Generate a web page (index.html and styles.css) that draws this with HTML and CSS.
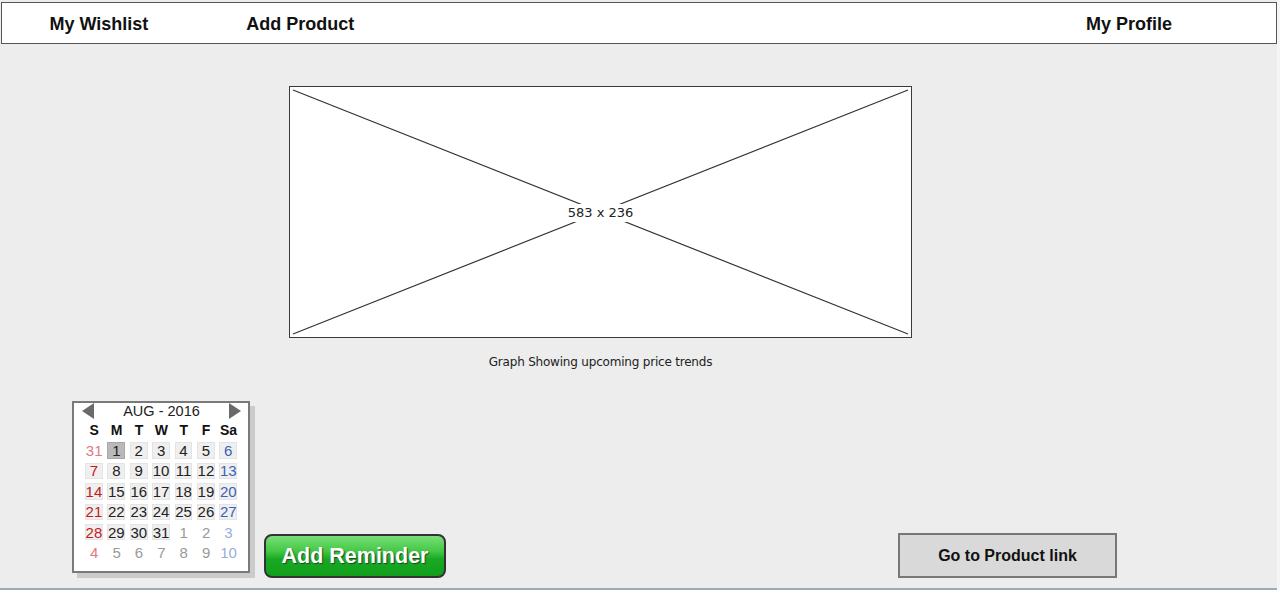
FILE: index.html
```html
<!DOCTYPE html>
<html>
<head>
<meta charset="utf-8">
<link rel="stylesheet" href="styles.css">
</head>
<body>
<div class="page">
  <nav class="nav">
    <a class="nav-item first">My Wishlist</a>
    <a class="nav-item second">Add Product</a>
    <a class="nav-item last">My Profile</a>
  </nav>

  <section class="graph">
    <div class="placeholder">
      <svg class="cross" viewBox="0 0 623 252" preserveAspectRatio="none">
        <line x1="3" y1="3" x2="620" y2="249" />
        <line x1="620" y1="3" x2="3" y2="249" />
      </svg>
      <span class="ph-label">583 x 236</span>
    </div>
    <p class="caption">Graph Showing upcoming price trends</p>
  </section>

  <section class="bottom">
    <div class="calendar">
      <div class="cal-head">
        <span class="arrow left"></span>
        <span class="month">AUG - 2016</span>
        <span class="arrow right"></span>
      </div>
      <div class="cal-grid">
        <span class="dow">S</span><span class="dow">M</span><span class="dow">T</span><span class="dow">W</span><span class="dow">T</span><span class="dow">F</span><span class="dow">Sa</span>

        <span class="d sun other">31</span><span class="d box sel">1</span><span class="d box">2</span><span class="d box">3</span><span class="d box">4</span><span class="d box">5</span><span class="d box sat">6</span>

        <span class="d box sun">7</span><span class="d box">8</span><span class="d box">9</span><span class="d box">10</span><span class="d box">11</span><span class="d box">12</span><span class="d box sat">13</span>

        <span class="d box sun">14</span><span class="d box">15</span><span class="d box">16</span><span class="d box">17</span><span class="d box">18</span><span class="d box">19</span><span class="d box sat">20</span>

        <span class="d box sun">21</span><span class="d box">22</span><span class="d box">23</span><span class="d box">24</span><span class="d box">25</span><span class="d box">26</span><span class="d box sat">27</span>

        <span class="d box sun">28</span><span class="d box">29</span><span class="d box">30</span><span class="d box">31</span><span class="d other">1</span><span class="d other">2</span><span class="d sat other">3</span>

        <span class="d sun other">4</span><span class="d other">5</span><span class="d other">6</span><span class="d other">7</span><span class="d other">8</span><span class="d other">9</span><span class="d sat other">10</span>
      </div>
    </div>

    <button class="btn-reminder">Add Reminder</button>
    <button class="btn-link">Go to Product link</button>
  </section>
</div>
</body>
</html>
```

FILE: styles.css
```css
* { box-sizing: border-box; }

html, body {
  margin: 0;
  padding: 0;
}

body {
  background: #f5f5f5;
  font-family: "Liberation Sans", Arial, sans-serif;
  color: #111;
  width: 1280px;
  height: 590px;
  overflow: hidden;
}

.page {
  width: 1277px;
  height: 590px;
  background: #ededed;
  border-bottom: 2px solid #9eaab6;
  padding-top: 2px;
  padding-left: 1px;
}

/* NAV */
.nav {
  display: flex;
  align-items: center;
  width: 1276px;
  height: 42px;
  background: #fff;
  border: 1.5px solid #555;
  padding-left: 47.5px;
  padding-right: 104px;
}

.nav-item {
  font-weight: bold;
  font-size: 18px;
  color: #111;
  padding-top: 3px;
}

.nav-item.second { margin-left: 98px; }
.nav-item.last { margin-left: auto; }

/* GRAPH */
.graph {
  margin-left: 288px;
  margin-top: 42px;
  width: 623px;
}

.placeholder {
  position: relative;
  width: 623px;
  height: 252px;
  background: #fff;
  border: 1.5px solid #3a3a3a;
}

.cross {
  display: block;
  width: 100%;
  height: 100%;
}

.cross line {
  stroke: #333;
  stroke-width: 1.2;
}

.ph-label {
  position: absolute;
  left: 50%;
  top: 50%;
  transform: translate(-50%, -50%);
  margin-top: 1px;
  background: #fff;
  padding: 2px 3px;
  font-family: "DejaVu Sans", sans-serif;
  font-size: 13px;
  color: #222;
  line-height: 14px;
}

.caption {
  margin: 17px 0 0;
  text-align: center;
  font-family: "DejaVu Sans", sans-serif;
  font-size: 12px;
  color: #222;
  letter-spacing: -0.2px;
}

/* BOTTOM */
.bottom {
  display: flex;
  align-items: flex-end;
  margin-top: 32px;
  padding-left: 71px;
}

.calendar {
  width: 178px;
  height: 172px;
  background: #fff;
  border: 2px solid #7a7a7a;
  box-shadow: 5px 5px 0 #cbcbcb;
  margin-bottom: 5px;
  padding: 0 8px 0 9px;
}

.cal-head {
  display: flex;
  align-items: center;
  justify-content: space-between;
  height: 16px;
}

.month {
  font-size: 14.5px;
  color: #222;
}

.arrow {
  width: 0;
  height: 0;
  border-top: 8px solid transparent;
  border-bottom: 8px solid transparent;
}

.arrow.left { border-right: 12px solid #6a6a6a; margin-left: -1px; }
.arrow.right { border-left: 12px solid #6a6a6a; margin-right: -1px; }

.cal-grid {
  display: grid;
  grid-template-columns: repeat(7, 22.4px);
  grid-auto-rows: 20.4px;
  margin-top: 1px;
}

.dow {
  display: flex;
  align-items: center;
  justify-content: center;
  font-weight: bold;
  font-size: 14px;
  color: #111;
}

.d {
  display: flex;
  align-items: center;
  justify-content: center;
  font-size: 15px;
  color: #222;
  line-height: 1;
}

.d.box {
  background: #efefef;
  box-shadow: inset 0 0 0 1px #e4e4e4;
  margin: 2px 2.5px 2px 2px;
}

.d.sel {
  background: #b9b9b9;
  box-shadow: inset 0 0 0 1px #a8a8a8;
}

.d.sun { color: #c41a1a; }
.d.sat { color: #3a62b5; }
.d.other { color: #9a9a9a; }
.d.sun.other { color: #dd7a86; }
.d.sat.other { color: #98b0d8; }

.btn-reminder {
  width: 182px;
  height: 44px;
  margin-left: 14px;
  margin-bottom: 0;
  border: 2px solid #333;
  border-radius: 8px;
  background: linear-gradient(to bottom, #7ade7a 0%, #44c844 38%, #18a824 58%, #12a01c 100%);
  color: #fff;
  font-family: "Liberation Sans", Arial, sans-serif;
  font-weight: bold;
  font-size: 21.5px;
  text-shadow: 1px 1px 1px #1f4a1f;
  padding: 0;
}

.btn-link {
  width: 219px;
  height: 45px;
  margin-left: 452px;
  margin-bottom: 0;
  border: 2px solid #777;
  border-radius: 0;
  background: #d9d9d9;
  color: #111;
  font-family: "Liberation Sans", Arial, sans-serif;
  font-weight: bold;
  font-size: 16px;
  padding: 0;
}
```
